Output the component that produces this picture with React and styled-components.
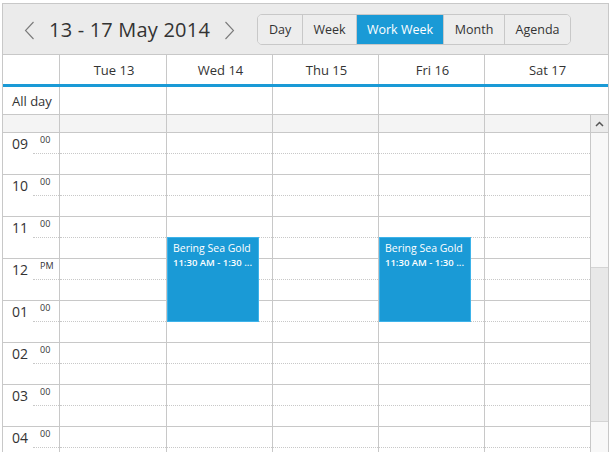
import React from 'react';
import styled, { createGlobalStyle } from 'styled-components';

const GlobalStyle = createGlobalStyle`
  body {
    margin: 0;
    overflow: hidden;
    background: #fff;
    font-family: "Open Sans", "Noto Sans", sans-serif;
    color: #333;
  }
`

const LINE = '#c8c8c8';
const BLUE = '#1a9ad6';

const days = ['Tue 13', 'Wed 14', 'Thu 15', 'Fri 16', 'Sat 17'];
const colWidths = [107, 106, 106, 106, 106];
const views = [
    { label: 'Day', width: 44 },
    { label: 'Week', width: 54 },
    { label: 'Work Week', width: 87, active: true },
    { label: 'Month', width: 61 },
    { label: 'Agenda', width: 66 },
];
const hours = [
    ['09', '00'], ['10', '00'], ['11', '00'], ['12', 'PM'],
    ['01', '00'], ['02', '00'], ['03', '00'], ['04', '00'],
];
const events = { 1: true, 3: true };

const Chevron = ({ dir }) => (
    <svg width="11" height="19" viewBox="0 0 11 19">
        <polyline
            points={dir === 'left' ? '9.5,1 1.5,9.5 9.5,18' : '1.5,1 9.5,9.5 1.5,18'}
            fill="none" stroke="#7a7a7a" strokeWidth="1.1" />
    </svg>
);

const App = () => {
    return (
        <>
            <GlobalStyle />
            <Scheduler>
                <Toolbar>
                    <NavButton><Chevron dir="left" /></NavButton>
                    <DateTitle>13 - 17 May 2014</DateTitle>
                    <NavButton><Chevron dir="right" /></NavButton>
                    <ViewGroup>
                        {views.map(v => (
                            <ViewButton key={v.label} $w={v.width} $active={v.active}>{v.label}</ViewButton>
                        ))}
                    </ViewGroup>
                </Toolbar>

                <HeaderRow>
                    <CornerCell />
                    {days.map((d, i) => (
                        <DayHeader key={d} $w={colWidths[i]} $last={i === days.length - 1}>{d}</DayHeader>
                    ))}
                </HeaderRow>

                <AllDayRow>
                    <AllDayLabel>All day</AllDayLabel>
                    {days.map((d, i) => (
                        <AllDayCell key={d} $w={colWidths[i]} $last={i === days.length - 1} />
                    ))}
                </AllDayRow>

                <GapRow>
                    <CornerCell />
                    {days.map((d, i) => (
                        <GapCell key={d} $w={colWidths[i]} />
                    ))}
                    <ScrollUp>
                        <svg width="9" height="6" viewBox="0 0 9 6">
                            <polyline points="1,5 4.5,1.5 8,5" fill="none" stroke="#555" strokeWidth="1.5" />
                        </svg>
                    </ScrollUp>
                </GapRow>

                <Body>
                    <TimeColumn>
                        {hours.map(([h, m]) => (
                            <TimeCell key={h}>
                                <HourText>{h}</HourText>
                                <MinuteCol>
                                    <MinuteText>{m}</MinuteText>
                                </MinuteCol>
                            </TimeCell>
                        ))}
                    </TimeColumn>
                    {days.map((d, i) => (
                        <DayColumn key={d} $w={colWidths[i]}>
                            {hours.map(([h]) => (
                                <React.Fragment key={h}>
                                    <Slot />
                                    <Slot $hour />
                                </React.Fragment>
                            ))}
                            {events[i] && (
                                <EventBox>
                                    <EventTitle>Bering Sea Gold</EventTitle>
                                    <EventTime>11:30 AM - 1:30 ...</EventTime>
                                </EventBox>
                            )}
                        </DayColumn>
                    ))}
                    <ScrollTrack>
                        <ScrollThumb />
                    </ScrollTrack>
                </Body>
            </Scheduler>
        </>
    )
};

const Scheduler = styled.div`
  margin: 3px 0 0 2px;
  width: 607px;
  height: 470px;
  box-sizing: border-box;
  border: 1px solid ${LINE};
  background: #fff;
  overflow: hidden;
`

const Toolbar = styled.div`
  height: 50px;
  display: flex;
  align-items: center;
  background: #ebebeb;
  border-bottom: 1px solid ${LINE};
  padding-left: 20px;
`

const NavButton = styled.div`
  display: flex;
  align-items: center;
  padding: 0 1px;
  margin-top: 2px;
`

const DateTitle = styled.div`
  font-size: 20px;
  color: #333;
  margin: 0 13px 0 13px;
  letter-spacing: 0.2px;
`

const ViewGroup = styled.div`
  display: flex;
  margin-left: 21px;
  height: 31px;
  border: 1px solid ${LINE};
  border-radius: 5px;
  overflow: hidden;
  box-sizing: border-box;
`

const ViewButton = styled.div`
  width: ${p => p.$w}px;
  display: flex;
  align-items: center;
  justify-content: center;
  font-size: 12.5px;
  background: ${p => p.$active ? BLUE : '#ededed'};
  color: ${p => p.$active ? '#fff' : '#333'};
  border-left: 1px solid ${LINE};
  box-sizing: border-box;

  &:first-child {
    border-left: none;
  }
`

const HeaderRow = styled.div`
  display: flex;
  height: 32px;
  box-sizing: border-box;
  border-bottom: 3px solid ${BLUE};
`

const CornerCell = styled.div`
  width: 57px;
  flex-shrink: 0;
  box-sizing: border-box;
  border-right: 1px solid ${LINE};
`

const DayHeader = styled.div`
  width: ${p => p.$last ? 'auto' : `${p.$w}px`};
  flex: ${p => p.$last ? 1 : '0 0 auto'};
  box-sizing: border-box;
  border-right: ${p => p.$last ? 'none' : `1px solid ${LINE}`};
  display: flex;
  align-items: center;
  justify-content: center;
  font-size: 13px;
  color: #333;
  padding-left: 2px;
`

const AllDayRow = styled.div`
  display: flex;
  height: 28px;
  box-sizing: border-box;
  border-bottom: 1px solid ${LINE};
`

const AllDayLabel = styled.div`
  width: 57px;
  flex-shrink: 0;
  box-sizing: border-box;
  border-right: 1px solid ${LINE};
  display: flex;
  align-items: center;
  padding-left: 9px;
  font-size: 13px;
`

const AllDayCell = styled.div`
  width: ${p => p.$last ? 'auto' : `${p.$w}px`};
  flex: ${p => p.$last ? 1 : '0 0 auto'};
  box-sizing: border-box;
  border-right: ${p => p.$last ? 'none' : `1px solid ${LINE}`};
`

const GapRow = styled.div`
  display: flex;
  height: 18px;
  box-sizing: border-box;
  background: #f4f4f4;
  border-bottom: 1px solid ${LINE};
`

const GapCell = styled.div`
  width: ${p => p.$w}px;
  flex-shrink: 0;
  box-sizing: border-box;
  border-right: 1px solid ${LINE};
`

const ScrollUp = styled.div`
  flex: 1;
  display: flex;
  align-items: center;
  justify-content: center;
  background: #ebebeb;
`

const Body = styled.div`
  display: flex;
`

const TimeColumn = styled.div`
  width: 57px;
  flex-shrink: 0;
  box-sizing: border-box;
  border-right: 1px solid ${LINE};
`

const TimeCell = styled.div`
  height: 42px;
  box-sizing: border-box;
  border-bottom: 1px solid ${LINE};
  display: flex;
`

const HourText = styled.div`
  width: 30px;
  flex-shrink: 0;
  box-sizing: border-box;
  padding: 1px 0 0 9px;
  font-size: 14px;
  line-height: 20px;
  color: #333;
`

const MinuteCol = styled.div`
  flex: 1;
`

const MinuteText = styled.div`
  height: 21px;
  box-sizing: border-box;
  border-bottom: 1px dotted ${LINE};
  padding: 0 0 0 7px;
  font-size: 9px;
  line-height: 14px;
  color: #333;
`

const DayColumn = styled.div`
  position: relative;
  width: ${p => p.$w}px;
  flex-shrink: 0;
  box-sizing: border-box;
  border-right: 1px solid ${LINE};
`

const Slot = styled.div`
  height: 21px;
  box-sizing: border-box;
  border-bottom: 1px ${p => p.$hour ? 'solid' : 'dotted'} ${LINE};
`

const EventBox = styled.div`
  position: absolute;
  left: 0;
  top: 104px;
  width: 92px;
  height: 85px;
  box-sizing: border-box;
  background: ${BLUE};
  border: 1px solid #3db3ea;
  padding: 3px 5px;
  color: #fff;
  overflow: hidden;
`

const EventTitle = styled.div`
  font-size: 10.5px;
  line-height: 15px;
  white-space: nowrap;
`

const EventTime = styled.div`
  font-size: 9.5px;
  font-weight: 600;
  line-height: 14px;
  white-space: nowrap;
`

const ScrollTrack = styled.div`
  flex: 1;
  background: #f8f8f8;
  padding-top: 134px;
`

const ScrollThumb = styled.div`
  height: 153px;
  background: #e8e8e8;
  border-top: 1px solid #d4d4d4;
  border-bottom: 1px solid #d4d4d4;
`

export default App;
